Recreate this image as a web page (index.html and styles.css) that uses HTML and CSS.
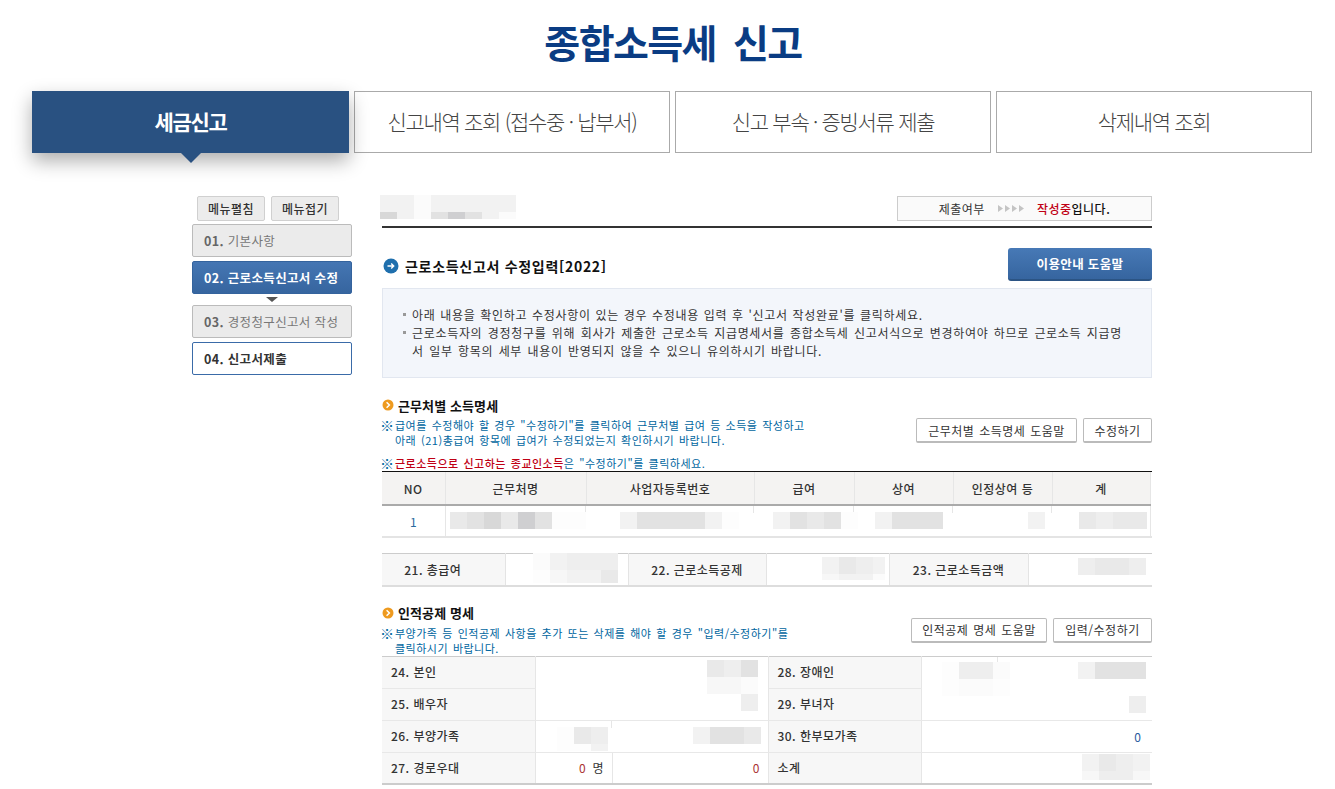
FILE: index.html
```html
<!DOCTYPE html>
<html lang="ko">
<head>
<meta charset="utf-8">
<title>종합소득세 신고</title>
<link rel="stylesheet" href="styles.css">
</head>
<body>
<div class="page">
  <h1 class="title">종합소득세 신고</h1>
  <nav class="tabs">
    <a class="tab active">세금신고</a>
    <a class="tab">신고내역 조회 (접수중 · 납부서)</a>
    <a class="tab">신고 부속 · 증빙서류 제출</a>
    <a class="tab">삭제내역 조회</a>
  </nav>
  <div class="body">
    <aside class="side">
      <div class="side-btns"><button class="sbtn">메뉴펼침</button><button class="sbtn">메뉴접기</button></div>
      <div class="step done"><b>01.</b> 기본사항</div>
      <div class="step cur"><b>02.</b> <strong>근로소득신고서 수정</strong></div>
      <div class="down"></div>
      <div class="step done"><b>03.</b> 경정청구신고서 작성</div>
      <div class="step next"><b>04.</b> <strong>신고서제출</strong></div>
    </aside>
    <main class="main">
      <div class="top">
        <div class="status">
          <span>제출여부</span>
          <svg class="arrows" width="28" height="9" viewBox="0 0 28 9"><path d="M1 1l5 3.5L1 8zM8 1l5 3.5L8 8zM15 1l5 3.5L15 8zM22 1l5 3.5L22 8z" fill="#c4c4c4"/></svg>
          <span><em class="red">작성중</em><strong>입니다.</strong></span>
        </div>
      </div>
      <div class="head">
        <h2 class="h-main">
          <svg width="16" height="16" viewBox="0 0 16 16"><circle cx="8" cy="8" r="7.5" fill="#1f6fad"/><path d="M4.5 8h6M8.2 5.6L10.7 8 8.2 10.4" fill="none" stroke="#fff" stroke-width="1.4"/></svg>
          근로소득신고서 수정입력[2022]
        </h2>
        <button class="help">이용안내 도움말</button>
      </div>
      <div class="info">
        <p class="li first">아래 내용을 확인하고 수정사항이 있는 경우 수정내용 입력 후 '신고서 작성완료'를 클릭하세요.</p>
        <p class="li">근로소득자의 경정청구를 위해 회사가 제출한 근로소득 지급명세서를 종합소득세 신고서식으로 변경하여야 하므로 근로소득 지급명<br>서 일부 항목의 세부 내용이 반영되지 않을 수 있으니 유의하시기 바랍니다.</p>
      </div>

      <div class="sec sec1">
        <div class="sec-l">
          <h3 class="h-sub"><svg width="12" height="12" viewBox="0 0 12 12"><circle cx="6" cy="6" r="5.5" fill="#ee9a1f"/><path d="M4.6 3.2L7.4 6 4.6 8.8" fill="none" stroke="#fff" stroke-width="1.5"/></svg>근무처별 소득명세</h3>
          <p class="note"><i>※</i>급여를 수정해야 할 경우 "수정하기"를 클릭하여 근무처별 급여 등 소득을 작성하고<br>아래 (21)총급여 항목에 급여가 수정되었는지 확인하시기 바랍니다.</p>
        </div>
        <div class="sec-r"><button class="wbtn">근무처별 소득명세 도움말</button><button class="wbtn">수정하기</button></div>
      </div>
      <p class="note note2"><i>※</i><span class="red">근로소득으로 신고하는 종교인소득</span>은 "수정하기"를 클릭하세요.</p>
      <div class="t1-wrap">
      <table class="t1">
        <colgroup><col class="c1"><col class="c2"><col class="c3"><col class="c4"><col class="c5"><col class="c6"><col class="c7"></colgroup>
        <tr><th>NO</th><th>근무처명</th><th>사업자등록번호</th><th>급여</th><th>상여</th><th>인정상여 등</th><th>계</th></tr>
        <tr><td class="no">1</td><td class="tick"></td><td class="tick"></td><td class="tick"></td><td class="tick"></td><td class="tick"></td><td class="end"></td></tr>
      </table>
      </div>
      <table class="t2">
        <tr><th class="a">21. 총급여</th><td class="b"></td><th class="c">22. 근로소득공제</th><td class="d"></td><th class="e">23. 근로소득금액</th><td class="f"></td></tr>
      </table>

      <div class="sec sec2">
        <div class="sec-l">
          <h3 class="h-sub"><svg width="12" height="12" viewBox="0 0 12 12"><circle cx="6" cy="6" r="5.5" fill="#ee9a1f"/><path d="M4.6 3.2L7.4 6 4.6 8.8" fill="none" stroke="#fff" stroke-width="1.5"/></svg>인적공제 명세</h3>
          <p class="note"><i>※</i>부양가족 등 인적공제 사항을 추가 또는 삭제를 해야 할 경우 "입력/수정하기"를<br>클릭하시기 바랍니다.</p>
        </div>
        <div class="sec-r"><button class="wbtn">인적공제 명세 도움말</button><button class="wbtn">입력/수정하기</button></div>
      </div>
      <table class="t3">
        <colgroup><col class="k1"><col class="v1"><col class="v2"><col class="k2"><col class="v3"><col class="v4"></colgroup>
        <tr><th>24. 본인</th><td colspan="2" class="nb"></td><th>28. 장애인</th><td class="nb tick"></td><td class="nb"></td></tr>
        <tr><th>25. 배우자</th><td colspan="2"></td><th>29. 부녀자</th><td colspan="2"></td></tr>
        <tr><th>26. 부양가족</th><td class="tick"></td><td></td><th>30. 한부모가족</th><td colspan="2" class="num blue">0</td></tr>
        <tr><th>27. 경로우대</th><td class="num"><span class="dark-red">0</span>&nbsp; 명</td><td class="num dark-red">0</td><th>소계</th><td colspan="2"></td></tr>
      </table>
    </main>
  </div>

  <div class="mz mz-top"><i class="g2"></i><i class="g2"></i><i class="g0"></i><i class="g2"></i><i class="g2"></i><i class="g2"></i><i class="g2"></i><i class="g2"></i><i class="g6"></i><i class="g2"></i><i class="g0"></i><i class="g5"></i><i class="g7"></i><i class="g5"></i><i class="g2"></i><i class="g0"></i></div>
  <div class="mz mz-a"><i class="g4"></i><i class="g5"></i><i class="g6"></i><i class="g4"></i><i class="g7"></i><i class="g5"></i><i class="gw"></i><i class="gw"></i></div>
  <div class="mz mz-b"><i class="g2"></i><i class="g5"></i><i class="g5"></i><i class="g5"></i><i class="g5"></i><i class="g2"></i><i class="gw"></i></div>
  <div class="mz mz-c"><i class="g2"></i><i class="g5"></i><i class="g4"></i><i class="g5"></i><i class="gw"></i></div>
  <div class="mz mz-d"><i class="g2"></i><i class="g5"></i><i class="g5"></i><i class="g5"></i></div>
  <div class="mz mz-e"><i class="g2"></i></div>
  <div class="mz mz-f"><i class="g4"></i><i class="g3"></i><i class="g4"></i><i class="g4"></i></div>
  <div class="mz mz-21"><i class="g0"></i><i class="g2"></i><i class="g3"></i><i class="g3"></i><i class="g3"></i><i class="gw"></i><i class="g1"></i><i class="g2"></i><i class="g2"></i><i class="g4"></i></div>
  <div class="mz mz-22"><i class="g2"></i><i class="g4"></i><i class="g3"></i><i class="g2"></i><i class="g1"></i><i class="g2"></i><i class="g2"></i><i class="g0"></i></div>
  <div class="mz mz-23"><i class="g3"></i><i class="g4"></i><i class="g4"></i><i class="g3"></i></div>
  <div class="mz mz-24"><i class="g4"></i><i class="g3"></i><i class="g5"></i><i class="g1"></i><i class="g1"></i><i class="g0"></i></div>
  <div class="mz mz-25"><i class="g3"></i></div>
  <div class="mz mz-26a"><i class="gw"></i><i class="g4"></i><i class="g3"></i><i class="gw"></i><i class="gw"></i><i class="g2"></i></div>
  <div class="mz mz-26b"><i class="g2"></i><i class="g5"></i><i class="g5"></i><i class="g4"></i></div>
  <div class="mz mz-28a"><i class="gw"></i><i class="g3"></i><i class="g3"></i><i class="g0"></i><i class="gw"></i><i class="g0"></i><i class="g0"></i><i class="gw"></i></div>
  <div class="mz mz-28b"><i class="g2"></i><i class="g5"></i><i class="g5"></i><i class="g5"></i></div>
  <div class="mz mz-29"><i class="g3"></i></div>
  <div class="mz mz-sum"><i class="g2"></i><i class="g4"></i><i class="g3"></i><i class="g2"></i><i class="g1"></i><i class="g3"></i><i class="g3"></i><i class="g1"></i></div>
</div>
</body>
</html>
```

FILE: styles.css
```css
* { box-sizing: border-box; }
html, body { margin: 0; padding: 0; background: #fff; }
body { font-family: "Noto Sans CJK KR", "Noto Sans", sans-serif; font-size: 12px; color: #333; }
.page { position: relative; width: 1335px; height: 789px; overflow: hidden; }
p, h1, h2, h3 { margin: 0; }
button { font-family: inherit; cursor: pointer; padding: 0; }

.title { height: 91px; padding: 11px 0 0 11px; text-align: center; font-size: 39px; line-height: 60px; font-weight: 700; color: #0a3c83; letter-spacing: -1.6px; word-spacing: 8px; }

.tabs { display: flex; gap: 5px; padding-left: 32px; }
.tab { width: 316px; height: 62px; padding-bottom: 2px; border: 1px solid #aaa; display: flex; align-items: center; justify-content: center; font-size: 21px; color: #444; letter-spacing: -1.3px; font-weight: 300; }
.tab.active { position: relative; width: 317px; background: #295181; border-color: #295181; color: #fff; font-weight: 700; box-shadow: 0 8px 18px rgba(0,0,0,.32); }
.tab.active::after { content: ""; position: absolute; left: 148px; top: 61px; border: 10px solid transparent; border-top-color: #295181; border-bottom: 0; }

.body { display: flex; padding-left: 192px; padding-top: 43px; gap: 30px; }
.side { width: 160px; }
.side-btns { display: flex; gap: 6px; padding-left: 5px; margin-bottom: 3px; }
.sbtn { width: 68px; height: 25px; border: 1px solid #d0d0d0; border-radius: 2px; background: #ececec; font-size: 12px; color: #333; font-weight: 500; letter-spacing: .5px; }
.step { height: 33px; line-height: 31px; padding-left: 11px; border: 1px solid #bbb; border-radius: 2px; font-size: 12.5px; letter-spacing: .35px; }
.step b { font-weight: 700; }
.step strong { font-weight: 500; }
.step.done { background: #ebebeb; color: #777; margin-bottom: 4px; }
.step.done b { color: #666; }
.step.cur { background: linear-gradient(#4576b3, #36659f); border-color: #34639d; color: #fff; font-weight: 700; }
.step.cur strong { font-weight: 700; }
.step.next { border-color: #3a6ba8; background: #fff; color: #333; }
.step.next strong { font-weight: 700; }
.down { width: 12px; height: 5px; margin: 3px auto 3px; border: 6px solid transparent; border-top: 5px solid #555; border-bottom: 0; }

.main { width: 770px; }
.top { height: 32px; border-bottom: 2px solid #333; display: flex; justify-content: flex-end; align-items: flex-start; }
.status { width: 255px; height: 25px; border: 1px solid #ccc; background: #fafafa; display: flex; align-items: center; justify-content: center; gap: 12px; font-size: 12px; color: #333; letter-spacing: .5px; }
.status strong { color: #111; font-weight: 500; }
.red { color: #c00014; font-style: normal; font-weight: 500; }
.head { height: 60px; display: flex; justify-content: space-between; padding-top: 20px; }
.h-main { display: flex; align-items: center; gap: 6px; height: 36px; font-size: 14px; font-weight: 700; color: #111; padding-left: 1px; letter-spacing: .7px; }
.help { width: 144px; height: 33px; border: 0; border-bottom: 2px solid #2b5484; border-radius: 3px; background: linear-gradient(#4779b6, #36659f); color: #fff; font-size: 12.5px; font-weight: 700; letter-spacing: .35px; }

.info { height: 90px; border: 1px solid #e2e7f0; background: #f3f6fb; padding: 17px 19px 0 19px; font-size: 12px; line-height: 18px; color: #333; letter-spacing: .68px; word-spacing: 1.4px; }
.li { position: relative; padding-left: 10px; }
.li.first { word-spacing: .8px; }
.li::before { content: ""; position: absolute; left: 1px; top: 7px; width: 3px; height: 3px; background: #999; }

.sec { display: flex; justify-content: space-between; }
.sec1 { height: 78px; padding-top: 18px; }
.sec2 { height: 69px; padding-top: 17px; }
.h-sub { display: flex; align-items: center; gap: 4px; height: 18px; font-size: 13px; font-weight: 700; color: #111; letter-spacing: .1px; }
.note { position: relative; margin-top: 4px; padding-left: 13px; font-size: 11px; line-height: 15px; color: #0066a0; letter-spacing: .5px; word-spacing: 1.2px; }
.note i { position: absolute; left: -2px; top: 0; font-style: normal; color: #0066a0; font-size: 14px; letter-spacing: 0; }
.sec-r { display: flex; gap: 6px; padding-top: 22px; align-items: flex-start; }
.wbtn { height: 25px; padding: 0 10px; border: 1px solid #bbb; border-bottom: 2px solid #bbb; border-radius: 2px; background: #fff; font-size: 12px; color: #333; letter-spacing: .5px; word-spacing: 1px; }
.sec1 .wbtn:first-child { width: 161px; }
.sec1 .wbtn:last-child { width: 69px; }
.sec2 .wbtn:first-child { width: 136px; }
.sec2 .wbtn:last-child { width: 99px; }
.sec2 .sec-r { padding-top: 14px; }
.note2 { height: 15px; margin-top: 0; }

table { border-collapse: collapse; table-layout: fixed; }
th { font-weight: 500; font-size: 12px; color: #333; letter-spacing: .45px; }
.t1-wrap { border-top: 1px solid #111; border-bottom: 2px solid #e4e4e4; }
.t1 { width: 768px; }
.t1 .c1 { width: 63px; } .t1 .c2 { width: 141px; } .t1 .c3 { width: 168px; } .t1 .c4 { width: 100px; } .t1 .c5 { width: 99px; } .t1 .c6 { width: 99px; } .t1 .c7 { width: 98px; }
.t1 th { height: 33px; background: #f4f3f2; border-right: 1px solid #e6e6e6; border-bottom: 2px solid #aaa; }
.t1 td { height: 31px; }
.t1 td.no, .t1 td.end { border-right: 1px solid #e6e6e6; }
.tick { background: linear-gradient(#e6e6e6, #e6e6e6) right top / 1px 7px no-repeat; }
.no { text-align: center; color: #2a6a9e; }

.t2 { width: 770px; margin-top: 15px; border-top: 1px solid #ccc; border-bottom: 2px solid #ddd; }
.t2 th { height: 32px; background: #f7f7f7; border-right: 1px solid #e4e4e4; }
.t2 td { border-right: 1px solid #e4e4e4; }
.t2 .a { width: 123px; padding-right: 22px; } .t2 .b { width: 123px; } .t2 .c { width: 138px; } .t2 .d { width: 123px; } .t2 .e { width: 139px; } .t2 .f { width: 124px; border-right: 0; }

.t3 { width: 770px; border-top: 1px solid #ccc; border-bottom: 2px solid #ccc; }
.t3 .k1 { width: 153px; } .t3 .v1 { width: 77px; } .t3 .v2 { width: 156px; } .t3 .k2 { width: 153px; } .t3 .v3 { width: 77px; } .t3 .v4 { width: 154px; }
.t3 th { height: 32px; background: #f7f7f7; text-align: left; padding: 0 0 1px 9px; border-right: 1px solid #e6e6e6; border-bottom: 1px solid #e8e8e8; }
.t3 td { border-right: 1px solid #e6e6e6; border-bottom: 1px solid #e8e8e8; }
.t3 td.tick { border-right: 0; }
.t3 td.nb { border-bottom: 0; }
.t3 td:last-child { border-right: 0; }
.num { text-align: right; padding-right: 8px; font-size: 12px; color: #333; }
.t3 .blue { color: #2a5a9e; padding-right: 11px; }
.dark-red { color: #a33; }

.mz { position: absolute; display: grid; grid-auto-rows: 17px; overflow: hidden; pointer-events: none; }
.mz i { display: block; }
.g0 { background: #fbfbfb; } .g1 { background: #f7f7f7; } .g2 { background: #f2f2f2; } .g3 { background: #eeeeee; } .g4 { background: #e9e9e9; } .g5 { background: #e2e2e2; } .g6 { background: #d8d8d8; } .g7 { background: #cfcfd1; } .gw { background: #fdfdfd; }
.mz-top { left: 380px; top: 195px; grid-template-columns: repeat(8, 17px); grid-template-rows: 17px 7px; }
.mz-a { left: 450px; top: 512px; grid-template-columns: repeat(8, 17px); }
.mz-b { left: 620px; top: 512px; grid-template-columns: repeat(7, 17px); }
.mz-c { left: 773px; top: 512px; grid-template-columns: repeat(5, 17px); }
.mz-d { left: 875px; top: 512px; grid-template-columns: repeat(4, 17px); }
.mz-e { left: 1028px; top: 512px; grid-template-columns: 17px; }
.mz-f { left: 1079px; top: 512px; grid-template-columns: repeat(4, 17px); }
.mz-21 { left: 533px; top: 553px; grid-template-columns: repeat(5, 17px); grid-template-rows: 17px 13px; }
.mz-22 { left: 822px; top: 557px; width: 63px; grid-template-columns: repeat(4, 17px); grid-template-rows: 17px 6px; }
.mz-23 { left: 1078px; top: 558px; grid-template-columns: repeat(4, 17px); }
.mz-24 { left: 707px; top: 660px; grid-template-columns: repeat(3, 17px); }
.mz-25 { left: 741px; top: 694px; grid-template-columns: 17px; }
.mz-26a { left: 557px; top: 727px; grid-template-columns: repeat(3, 17px); grid-template-rows: 17px 7px; }
.mz-26b { left: 693px; top: 727px; grid-template-columns: repeat(4, 17px); }
.mz-28a { left: 942px; top: 662px; grid-template-columns: repeat(4, 17px); }
.mz-28b { left: 1078px; top: 662px; grid-template-columns: repeat(4, 17px); }
.mz-29 { left: 1129px; top: 696px; grid-template-columns: 17px; }
.mz-sum { left: 1082px; top: 754px; grid-template-columns: repeat(4, 17px); grid-template-rows: 17px 9px; }
```
